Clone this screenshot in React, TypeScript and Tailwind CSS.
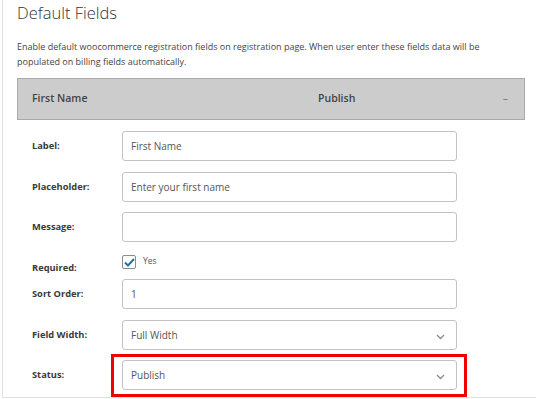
import { FC, ReactNode } from 'react'

const Chevron: FC = () => (
	<svg width="9" height="6" viewBox="0 0 9 6" fill="none" className="absolute right-[11px] top-[13px]">
		<path d="M1 1l3.5 3.5L8 1" stroke="#8a8a8a" strokeWidth="1.3" />
	</svg>
)

const Field: FC<{ value?: string; select?: boolean }> = ({ value = '', select }) => (
	<div className="relative w-[335px] h-[30px] border border-[#c3c3c3] rounded-[3px] bg-white flex items-center pl-[8px] text-[10px] text-[#555]">
		{value}
		{select && <Chevron />}
	</div>
)

const Row: FC<{ label: string; className?: string; children: ReactNode }> = ({ label, className = '', children }) => (
	<div className={`flex items-center ${className}`}>
		<div className="w-[90px] text-[9.3px] font-bold text-[#3a3a3a]">{label}</div>
		{children}
	</div>
)

const App: FC = () => {
	return (
		<div className="w-[536px] h-[399px] overflow-hidden bg-white" style={{ fontFamily: '"Open Sans", "Noto Sans", sans-serif' }}>
			<div className="ml-[2px] h-[398px] border-l border-b border-[#e2e2e2] pl-[14px]">
				<h1 className="pt-[1px] text-[16.5px] leading-[24px] font-light text-[#333]">Default Fields</h1>
				<p className="mt-[14px] w-[480px] text-[9px] leading-[15px] text-[#444]">
					Enable default woocommerce registration fields on registration page. When user enter these fields data will be populated on billing fields automatically.
				</p>
				<div className="mt-[9px] w-[508px] h-[42px] bg-[#cccccc] border border-[#a9a9a9] flex items-center text-[10.5px] font-semibold text-[#444]">
					<div className="w-[300px] pl-[14px]">First Name</div>
					<div>Publish</div>
					<div className="ml-auto pr-[16px] font-normal text-[#777]">–</div>
				</div>
				<div className="pl-[15px]">
					<Row label="Label:" className="mt-[11px]">
						<Field value="First Name" />
					</Row>
					<Row label="Placeholder:" className="mt-[11px]">
						<Field value="Enter your first name" />
					</Row>
					<Row label="Message:" className="mt-[10px]">
						<Field />
					</Row>
					<div className="flex mt-[13px]">
						<div className="w-[90px] pt-[6px] text-[9.3px] leading-[14px] font-bold text-[#3a3a3a]">Required:</div>
						<div className="flex items-start">
							<div className="w-[14px] h-[14px] border border-[#8c8c8c] rounded-[2px] bg-white flex items-center justify-center">
								<svg width="11" height="9" viewBox="0 0 11 9" fill="none">
									<path d="M1 4.5l3 3L10 1" stroke="#2271b1" strokeWidth="2" />
								</svg>
							</div>
							<span className="ml-[7px] text-[8.5px] leading-[12px] text-[#555]">Yes</span>
						</div>
					</div>
					<Row label="Sort Order:" className="mt-[4px]">
						<Field value="1" />
					</Row>
					<Row label="Field Width:" className="mt-[11px]">
						<Field value="Full Width" select />
					</Row>
					<Row label="Status:" className="mt-[10px]">
						<div className="relative">
							<Field value="Publish" select />
							<div className="absolute left-[-11px] right-[-10px] top-[-6px] bottom-[-7px] border-[3px] border-[#f00000]" />
						</div>
					</Row>
				</div>
			</div>
		</div>
	)
}

export default App
